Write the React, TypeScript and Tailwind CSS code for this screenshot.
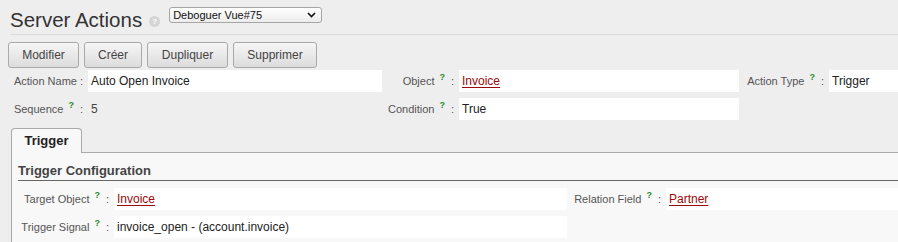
import React from 'react';

const font = "font-['Liberation_Sans',Arial,Helvetica,sans-serif]";

function Help() {
  return <sup className="ml-[5px] text-[9px] font-bold text-[#2a8a2a]">?</sup>;
}

function Label({ text, help = true }: { text: string; help?: boolean }) {
  return (
    <div className="flex h-[22px] items-center justify-end whitespace-nowrap pr-[5px] text-[11px] text-[#555]">
      <span>{text}</span>
      {help && <Help />}
      <span className={help ? 'ml-[6px]' : 'ml-[3px]'}>:</span>
    </div>
  );
}

function Field({ children, white = true }: { children?: React.ReactNode; white?: boolean }) {
  return (
    <div
      className={
        'h-[22px] overflow-hidden whitespace-nowrap pl-[3px] text-[12px] leading-[22px] text-[#222] ' +
        (white ? 'bg-white' : '')
      }
    >
      {children}
    </div>
  );
}

function RecordLink({ children }: { children: React.ReactNode }) {
  return <span className="text-[#9b0a0a] underline underline-offset-2">{children}</span>;
}

const buttons = [
  { label: 'Modifier', w: 'w-[71px]' },
  { label: 'Créer', w: 'w-[58px]' },
  { label: 'Dupliquer', w: 'w-[81px]' },
  { label: 'Supprimer', w: 'w-[84px]' },
];

export default function App() {
  return (
    <div className={`min-h-screen overflow-hidden bg-[#efeeef] pl-[8px] ${font}`}>
      {/* header */}
      <div className="ml-[2px] flex h-[35px] items-start border-b border-[#dcdbdc]">
        <h1 className="pt-[8px] text-[20.5px] leading-[24px] text-[#333]">Server Actions</h1>
        <span className="ml-[7px] mt-[16px] flex h-[11px] w-[11px] items-center justify-center rounded-full bg-[#d6d5d6] text-[8px] font-bold leading-none text-white">
          ?
        </span>
        <div className="ml-[9px] mt-[7px] flex h-[16px] w-[153px] items-center justify-between rounded-[3px] border border-[#a5a5a5] bg-gradient-to-b from-white to-[#ececec] pl-[3px] pr-[5px] text-[11px] text-[#111]">
          <span>Deboguer Vue#75</span>
          <svg width="9" height="6" viewBox="0 0 9 6">
            <path d="M1 1 L4.5 4.5 L8 1" fill="none" stroke="#111" strokeWidth="1.6" />
          </svg>
        </div>
      </div>

      {/* buttons */}
      <div className="mt-[7px] flex gap-[5px]">
        {buttons.map((b) => (
          <button
            key={b.label}
            className={`h-[26px] ${b.w} rounded-[3px] border border-[#a9a9a9] bg-gradient-to-b from-[#f6f6f6] to-[#dcdcdc] text-[12px] text-[#444]`}
          >
            {b.label}
          </button>
        ))}
      </div>

      {/* main form */}
      <div className="mt-[2px] grid grid-cols-[80px_294px_77px_280px_90px_69px] gap-y-[6px]">
        <Label text="Action Name" help={false} />
        <Field>Auto Open Invoice</Field>
        <Label text="Object" />
        <Field>
          <RecordLink>Invoice</RecordLink>
        </Field>
        <Label text="Action Type" />
        <Field>Trigger</Field>

        <Label text="Sequence" />
        <Field white={false}>
          <span className="text-[#444]">5</span>
        </Field>
        <Label text="Condition" />
        <Field>True</Field>
        <div />
        <div />
      </div>

      {/* notebook */}
      <div className="ml-[3px] mt-[8px]">
        <div className="relative z-10 -mb-px flex h-[25px] w-[71px] items-center justify-center rounded-t-[4px] border border-b-0 border-[#aaa] bg-[#f8f8f8] text-[13px] font-bold text-[#222]">
          Trigger
        </div>
        <div className="border-l border-t border-[#aaa] bg-[#f8f8f8] pb-[10px]">
          <div className="ml-[6px] border-b border-[#666] pb-[1px] pt-[10px] text-[13px] font-bold leading-[16px] text-[#444]">
            Trigger Configuration
          </div>
          <div className="mt-[7px] grid grid-cols-[102px_453px_99px_1fr] gap-y-[6px]">
            <Label text="Target Object" />
            <Field>
              <RecordLink>Invoice</RecordLink>
            </Field>
            <Label text="Relation Field" />
            <Field>
              <RecordLink>Partner</RecordLink>
            </Field>

            <Label text="Trigger Signal" />
            <Field>invoice_open - (account.invoice)</Field>
            <div />
            <div />
          </div>
        </div>
      </div>
    </div>
  );
}
